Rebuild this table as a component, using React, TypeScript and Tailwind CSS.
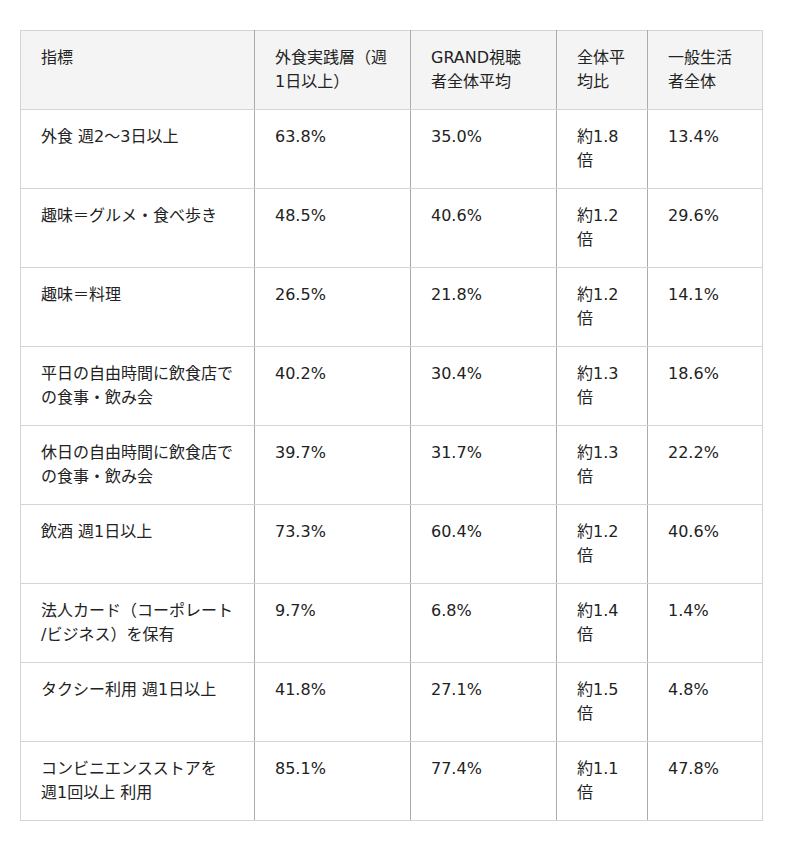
import type { ReactNode } from 'react';

const rows: [ReactNode, string, string, string, string][] = [
  ['外食 週2〜3日以上', '63.8%', '35.0%', '約1.8倍', '13.4%'],
  ['趣味＝グルメ・食べ歩き', '48.5%', '40.6%', '約1.2倍', '29.6%'],
  ['趣味＝料理', '26.5%', '21.8%', '約1.2倍', '14.1%'],
  ['平日の自由時間に飲食店での食事・飲み会', '40.2%', '30.4%', '約1.3倍', '18.6%'],
  ['休日の自由時間に飲食店での食事・飲み会', '39.7%', '31.7%', '約1.3倍', '22.2%'],
  ['飲酒 週1日以上', '73.3%', '60.4%', '約1.2倍', '40.6%'],
  [
    <>
      法人カード（コーポレート
      <wbr />
      /ビジネス）を保有
    </>,
    '9.7%',
    '6.8%',
    '約1.4倍',
    '1.4%',
  ],
  ['タクシー利用 週1日以上', '41.8%', '27.1%', '約1.5倍', '4.8%'],
  [
    <>
      コンビニエンスストアを
      <br />
      週1回以上 利用
    </>,
    '85.1%',
    '77.4%',
    '約1.1倍',
    '47.8%',
  ],
];

const headers = ['指標', '外食実践層（週1日以上）', 'GRAND視聴者全体平均', '全体平均比', '一般生活者全体'];
const widths = ['w-[234px]', 'w-[156px]', 'w-[146px]', 'w-[91px]', 'w-[115px]'];

const cell = 'px-5 py-[15px] align-top text-left font-normal border-b border-b-[#d4d4d4] border-r border-r-[#ababab] last:border-r-[#d4d4d4]';

export default function App() {
  return (
    <div
      className="bg-white min-h-[851px] pt-[30px] pl-5 text-[16px] leading-6 text-[#222]"
      style={{ fontFamily: '"DejaVu Sans", "Noto Sans CJK JP", sans-serif' }}
    >
      <table className="table-fixed border-collapse w-[742px] border border-[#d4d4d4]">
        <thead>
          <tr className="bg-[#f4f4f4]">
            {headers.map((h, i) => (
              <th key={h} className={`${cell} ${widths[i]}`}>
                {h}
              </th>
            ))}
          </tr>
        </thead>
        <tbody>
          {rows.map((r, ri) => (
            <tr key={ri}>
              {r.map((v, i) => (
                <td key={i} className={cell}>
                  {v}
                </td>
              ))}
            </tr>
          ))}
        </tbody>
      </table>
    </div>
  );
}
